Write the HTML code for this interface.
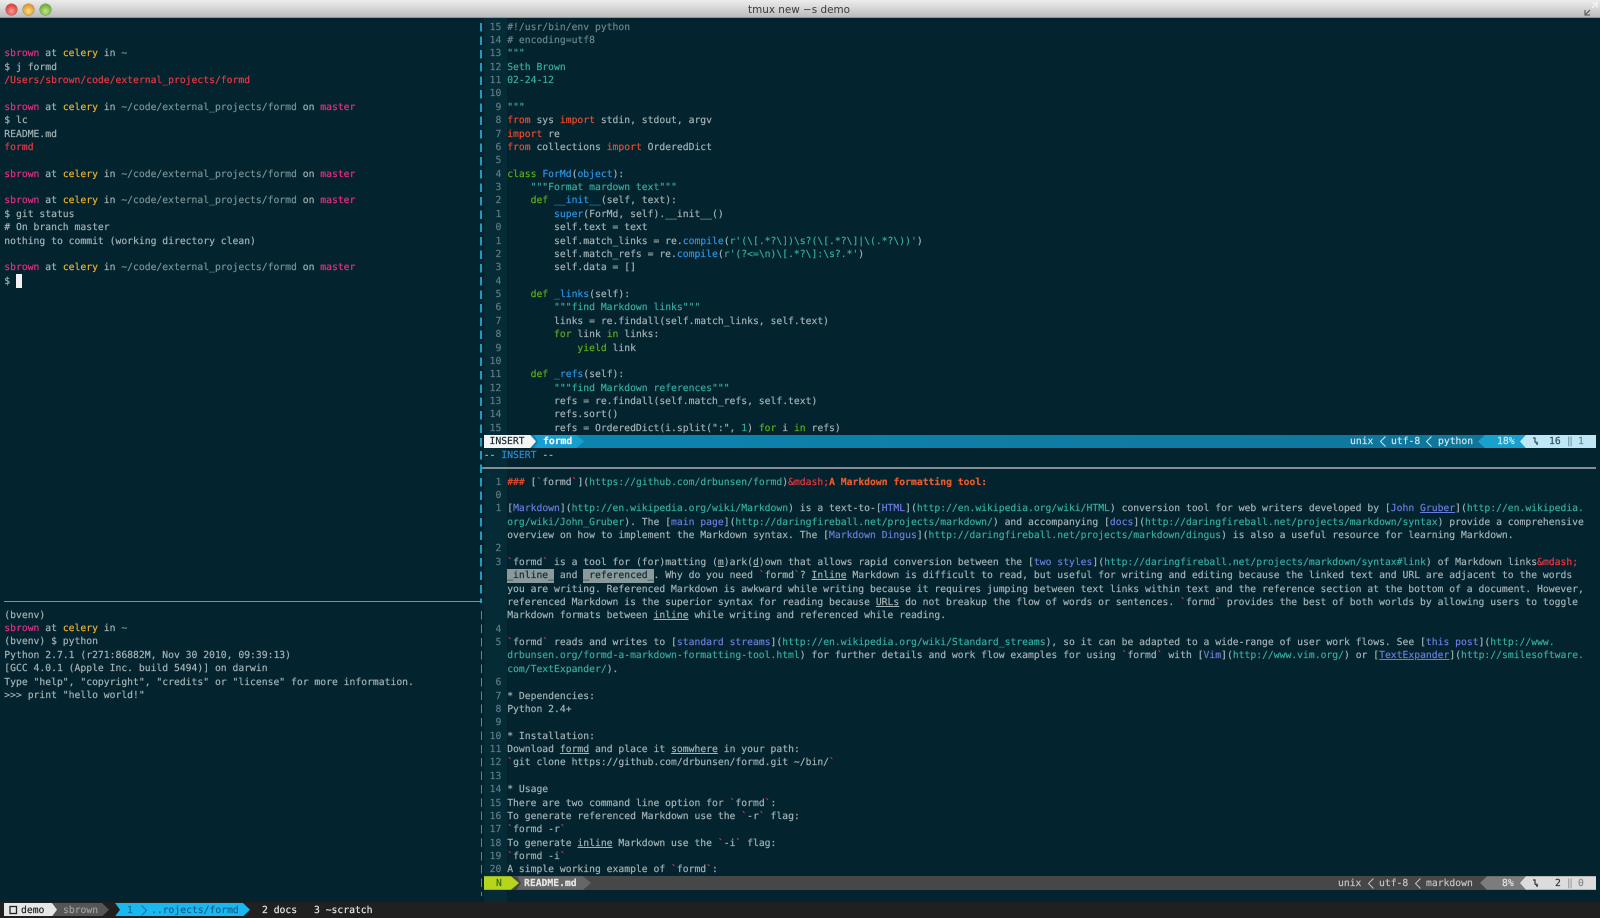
<!DOCTYPE html>
<html><head><meta charset="utf-8"><title>tmux new -s demo</title>
<style>
html,body{margin:0;padding:0;background:#03242f}
body{width:1600px;height:918px;overflow:hidden;position:relative}
#root{position:absolute;left:0;top:0;width:1600px;height:918px;background:#03242f;overflow:hidden;filter:blur(.3px)}
pre,.t{font-family:"DejaVu Sans Mono","Liberation Mono",monospace;font-size:9.73px;text-rendering:geometricPrecision;margin:0;-webkit-text-stroke:.18px}
pre{position:absolute;line-height:13.38px;color:#a4b2b4;white-space:pre}
.t{position:absolute;white-space:pre;line-height:13.38px;margin-top:.7px}
.a{position:absolute}
.p{color:#ea2c88}.y{color:#eeb02e}.d{color:#7a9296}.r{color:#f23640}.n{color:#5f7c84}
.c{color:#6a868c}.s{color:#36ad9f}.k{color:#f04c2c}.g{color:#5cae1c}.b{color:#2f94e2}
.v{color:#6c7cdc}.o{color:#ec5a2c;font-weight:bold}.q{color:#de3e54}.w{color:#a8b6b6}
u{text-decoration:underline;text-underline-offset:1px}
.h{display:inline-block;line-height:13.38px;background:#8a9a9a;color:#0c2a34}
</style></head><body><div id="root">

<div class="a" style="left:484px;top:18px;width:23px;height:884px;background:#052b37"></div>

<div class="a" style="left:0;top:0;width:1600px;height:18px;background:linear-gradient(#ececec,#dedede 30%,#b9b9b9)"></div>
<div class="a" style="left:0;top:17px;width:1600px;height:1px;background:#8a9a98"></div>
<div class="a" style="left:6px;top:3.5px;width:11px;height:11px;border-radius:50%;background:radial-gradient(circle at 50% 65%,#ff9a94,#d8433f 70%);box-shadow:0 0 0 .5px #9c4a48"></div>
<div class="a" style="left:23px;top:3.5px;width:11px;height:11px;border-radius:50%;background:radial-gradient(circle at 50% 65%,#ffdc8a,#dc9a2c 70%);box-shadow:0 0 0 .5px #9c7a3a"></div>
<div class="a" style="left:39.5px;top:3.5px;width:11px;height:11px;border-radius:50%;background:radial-gradient(circle at 50% 65%,#c4e88e,#6fae38 70%);box-shadow:0 0 0 .5px #5f8a3a"></div>
<div class="a" style="left:729px;top:2.5px;width:140px;text-align:center;font:10.4px/15px 'DejaVu Sans',sans-serif;color:#3a3a3a;white-space:nowrap">tmux new −s demo</div>
<svg class="a" style="left:1584px;top:2px" width="14" height="14" viewBox="0 0 14 14"><path d="M8 1h5v5M13 1L8 6" fill="none" stroke="#f4f4f4" stroke-width="1.3"/><path d="M6 13H1V8M1 13l5-5" fill="none" stroke="#666" stroke-width="1.3"/></svg>

<div class="a" style="left:480.3px;top:22.7px;width:1.7px;height:580px;background:repeating-linear-gradient(#1f9cc0 0,#1f9cc0 8.5px,transparent 8.5px,transparent 13.38px)"></div>
<div class="a" style="left:480.6px;top:611px;width:1.4px;height:285px;background:repeating-linear-gradient(#6f8488 0,#6f8488 8.5px,transparent 8.5px,transparent 13.38px)"></div>
<div class="a" style="left:4px;top:601px;width:478px;height:1px;background:#3fa6cc"></div>
<div class="a" style="left:481px;top:467.3px;width:1115px;height:1.5px;background:#858c96"></div>
<div class="a" style="left:481px;top:467.3px;width:3px;height:1.5px;background:#2ba0c4"></div>

<pre style="left:4.3px;top:20.5px">


<span class="p">sbrown</span> at <span class="y">celery</span> in <span class="d">~</span>
$ j formd
<span class="r">/Users/sbrown/code/external_projects/formd</span>

<span class="p">sbrown</span> at <span class="y">celery</span> in <span class="d">~/code/external_projects/formd</span> on <span class="p">master</span>
$ lc
README.md
<span class="r">formd</span>

<span class="p">sbrown</span> at <span class="y">celery</span> in <span class="d">~/code/external_projects/formd</span> on <span class="p">master</span>

<span class="p">sbrown</span> at <span class="y">celery</span> in <span class="d">~/code/external_projects/formd</span> on <span class="p">master</span>
$ git status
# On branch master
nothing to commit (working directory clean)

<span class="p">sbrown</span> at <span class="y">celery</span> in <span class="d">~/code/external_projects/formd</span> on <span class="p">master</span>
$</pre>
<div class="a" style="left:16px;top:274px;width:6px;height:14px;background:#f2f2f2"></div>

<pre style="left:4.3px;top:608.7px">(bvenv)
<span class="p">sbrown</span> at <span class="y">celery</span> in <span class="d">~</span>
(bvenv) $ python
Python 2.7.1 (r271:86882M, Nov 30 2010, 09:39:13)
[GCC 4.0.1 (Apple Inc. build 5494)] on darwin
Type "help", "copyright", "credits" or "license" for more information.
&gt;&gt;&gt; print "hello world!"</pre>

<pre style="left:483.8px;top:20.6px"><span class="n"> 15 </span><span class="c">#!/usr/bin/env python</span>
<span class="n"> 14 </span><span class="c"># encoding=utf8</span>
<span class="n"> 13 </span><span class="s">"""</span>
<span class="n"> 12 </span><span class="s">Seth Brown</span>
<span class="n"> 11 </span><span class="s">02-24-12</span>
<span class="n"> 10 </span>
<span class="n">  9 </span><span class="s">"""</span>
<span class="n">  8 </span><span class="k">from</span> sys <span class="k">import</span> stdin, stdout, argv
<span class="n">  7 </span><span class="k">import</span> re
<span class="n">  6 </span><span class="k">from</span> collections <span class="k">import</span> OrderedDict
<span class="n">  5 </span>
<span class="n">  4 </span><span class="g">class</span> <span class="b">ForMd</span>(<span class="b">object</span>):
<span class="n">  3 </span>    <span class="s">"""Format mardown text"""</span>
<span class="n">  2 </span>    <span class="g">def</span> <span class="b">__init__</span>(self, text):
<span class="n">  1 </span>        <span class="b">super</span>(ForMd, self).__init__()
<span class="n">  0 </span>        self.text = text
<span class="n">  1 </span>        self.match_links = re.<span class="b">compile</span>(<span class="s">r'(\[.*?\])\s?(\[.*?\]|\(.*?\))'</span>)
<span class="n">  2 </span>        self.match_refs = re.<span class="b">compile</span>(<span class="s">r'(?&lt;=\n)\[.*?\]:\s?.*'</span>)
<span class="n">  3 </span>        self.data = []
<span class="n">  4 </span>
<span class="n">  5 </span>    <span class="g">def</span> <span class="b">_links</span>(self):
<span class="n">  6 </span>        <span class="s">"""find Markdown links"""</span>
<span class="n">  7 </span>        links = re.findall(self.match_links, self.text)
<span class="n">  8 </span>        <span class="g">for</span> link <span class="g">in</span> links:
<span class="n">  9 </span>            <span class="g">yield</span> link
<span class="n"> 10 </span>
<span class="n"> 11 </span>    <span class="g">def</span> <span class="b">_refs</span>(self):
<span class="n"> 12 </span>        <span class="s">"""find Markdown references"""</span>
<span class="n"> 13 </span>        refs = re.findall(self.match_refs, self.text)
<span class="n"> 14 </span>        refs.sort()
<span class="n"> 15 </span>        refs = OrderedDict(i.split(":", <span class="s">1</span>) <span class="g">for</span> i <span class="g">in</span> refs)</pre>

<!-- upper statusline -->
<div class="a" style="left:484px;top:434.8px;width:1112px;height:13.4px;background:linear-gradient(90deg,#0b86b0,#0f7ba4 60%,#0f7398)"></div>
<div class="a" style="left:484px;top:434.8px;width:52px;height:13.4px;background:#f4f6f6;clip-path:polygon(0 0,46px 0,52px 50%,46px 100%,0 100%)"></div>
<div class="a" style="left:534px;top:434.8px;width:50px;height:13.4px;background:#17a0cf;clip-path:polygon(0 0,42px 0,50px 50%,42px 100%,0 100%,4px 50%)"></div>
<span class="t" style="left:489.5px;top:434.8px;color:#1b2a30">INSERT</span>
<span class="t" style="left:543px;top:434.8px;color:#eef8fc;font-weight:bold">formd</span>
<span class="t" style="left:1350px;top:434.8px;color:#cfe6ee">unix</span>
<svg class="a" style="left:1379px;top:435px" width="8" height="13"><path d="M6.5 1.5L1.5 6.5L6.5 11.5" fill="none" stroke="#cfe6ee"/></svg>
<span class="t" style="left:1391px;top:434.8px;color:#cfe6ee">utf-8</span>
<svg class="a" style="left:1425px;top:435px" width="8" height="13"><path d="M6.5 1.5L1.5 6.5L6.5 11.5" fill="none" stroke="#cfe6ee"/></svg>
<span class="t" style="left:1438px;top:434.8px;color:#cfe6ee">python</span>
<div class="a" style="left:1478px;top:434.8px;width:50px;height:13.4px;background:#19a0cc;clip-path:polygon(7px 0,100% 0,100% 100%,7px 100%,0 50%)"></div>
<span class="t" style="left:1497px;top:434.8px;color:#cdeaf4">18%</span>
<div class="a" style="left:1520px;top:434.8px;width:76px;height:13.4px;background:#bfe7f6;clip-path:polygon(6px 0,100% 0,100% 100%,6px 100%,0 50%)"></div>
<svg class="a" style="left:1532px;top:437px" width="8" height="9"><path d="M1 1h2v4l3 2M5 4.5v3.5" fill="none" stroke="#33505a" stroke-width="1.2"/></svg>
<span class="t" style="left:1549px;top:434.8px;color:#2c4e5a">16</span>
<span class="t" style="left:1567px;top:434.8px;color:#6f93a0">‖</span>
<span class="t" style="left:1578px;top:434.8px;color:#5f8a9a">1</span>
<pre style="left:483.8px;top:448.8px"><span>-- </span><span style="color:#2a8ed0">INSERT</span> --</pre>

<pre style="left:483.8px;top:475.5px"><span class="n">  1 </span><span class="k">###</span> [<span class="q">`</span>formd<span class="q">`</span>](<span class="s">https://github.com/drbunsen/formd</span>)<span class="r">&amp;mdash;</span><span class="o">A Markdown formatting tool:</span>
<span class="n">  0 </span>
<span class="n">  1 </span>[<span class="v">Markdown</span>](<span class="s">http://en.wikipedia.org/wiki/Markdown</span>) is a text-to-[<span class="v">HTML</span>](<span class="s">http://en.wikipedia.org/wiki/HTML</span>) conversion tool for web writers developed by [<span class="v">John <u>Gruber</u></span>](<span class="s">http://en.wikipedia.</span>
    <span class="s">org/wiki/John_Gruber</span>). The [<span class="v">main page</span>](<span class="s">http://daringfireball.net/projects/markdown/</span>) and accompanying [<span class="v">docs</span>](<span class="s">http://daringfireball.net/projects/markdown/syntax</span>) provide a comprehensive
    overview on how to implement the Markdown syntax. The [<span class="v">Markdown Dingus</span>](<span class="s">http://daringfireball.net/projects/markdown/dingus</span>) is also a useful resource for learning Markdown.
<span class="n">  2 </span>
<span class="n">  3 </span><span class="q">`</span>formd<span class="q">`</span> is a tool for (for)matting (<u>m</u>)ark(<u>d</u>)own that allows rapid conversion between the [<span class="v">two styles</span>](<span class="s">http://daringfireball.net/projects/markdown/syntax#link</span>) of Markdown links<span class="r">&amp;mdash;</span>
    <span class="h">_inline_</span> and <span class="h">_referenced_</span>. Why do you need <span class="q">`</span>formd<span class="q">`</span>? <u>Inline</u> Markdown is difficult to read, but useful for writing and editing because the linked text and URL are adjacent to the words
    you are writing. Referenced Markdown is awkward while writing because it requires jumping between text links within text and the reference section at the bottom of a document. However,
    referenced Markdown is the superior syntax for reading because <u>URLs</u> do not breakup the flow of words or sentences. <span class="q">`</span>formd<span class="q">`</span> provides the best of both worlds by allowing users to toggle
    Markdown formats between <u>inline</u> while writing and referenced while reading.
<span class="n">  4 </span>
<span class="n">  5 </span><span class="q">`</span>formd<span class="q">`</span> reads and writes to [<span class="v">standard streams</span>](<span class="s">http://en.wikipedia.org/wiki/Standard_streams</span>), so it can be adapted to a wide-range of user work flows. See [<span class="v">this post</span>](<span class="s">http://www.</span>
    <span class="s">drbunsen.org/formd-a-markdown-formatting-tool.html</span>) for further details and work flow examples for using <span class="q">`</span>formd<span class="q">`</span> with [<span class="v">Vim</span>](<span class="s">http://www.vim.org/</span>) or [<span class="v"><u>TextExpander</u></span>](<span class="s">http://smilesoftware.</span>
    <span class="s">com/TextExpander/</span>).
<span class="n">  6 </span>
<span class="n">  7 </span>* Dependencies:
<span class="n">  8 </span>Python 2.4+
<span class="n">  9 </span>
<span class="n"> 10 </span>* Installation:
<span class="n"> 11 </span>Download <u>formd</u> and place it <u>somwhere</u> in your path:
<span class="n"> 12 </span><span class="q">`</span>git clone https://github.com/drbunsen/formd.git ~/bin/<span class="q">`</span>
<span class="n"> 13 </span>
<span class="n"> 14 </span>* Usage
<span class="n"> 15 </span>There are two command line option for <span class="q">`</span>formd<span class="q">`</span>:
<span class="n"> 16 </span>To generate referenced Markdown use the <span class="q">`</span>-r<span class="q">`</span> flag:
<span class="n"> 17 </span><span class="q">`</span>formd -r<span class="q">`</span>
<span class="n"> 18 </span>To generate <u>inline</u> Markdown use the <span class="q">`</span>-i<span class="q">`</span> flag:
<span class="n"> 19 </span><span class="q">`</span>formd -i<span class="q">`</span>
<span class="n"> 20 </span>A simple working example of <span class="q">`</span>formd<span class="q">`</span>:</pre>

<!-- lower statusline -->
<div class="a" style="left:484px;top:876.3px;width:1112px;height:13.4px;background:#474747"></div>
<div class="a" style="left:484px;top:876.3px;width:35px;height:13.4px;background:#b5d61c;clip-path:polygon(0 0,27px 0,35px 50%,27px 100%,0 100%)"></div>
<div class="a" style="left:517px;top:876.3px;width:74px;height:13.4px;background:#666;clip-path:polygon(0 0,66px 0,74px 50%,66px 100%,0 100%,4px 50%)"></div>
<span class="t" style="left:496px;top:876.3px;color:#3a6a10">N</span>
<span class="t" style="left:524px;top:876.3px;color:#e6e6e6;font-weight:bold">README.md</span>
<span class="t" style="left:1338px;top:876.3px;color:#c4c4c4">unix</span>
<svg class="a" style="left:1367px;top:876.5px" width="8" height="13"><path d="M6.5 1.5L1.5 6.5L6.5 11.5" fill="none" stroke="#c4c4c4"/></svg>
<span class="t" style="left:1379px;top:876.3px;color:#c4c4c4">utf-8</span>
<svg class="a" style="left:1414px;top:876.5px" width="8" height="13"><path d="M6.5 1.5L1.5 6.5L6.5 11.5" fill="none" stroke="#c4c4c4"/></svg>
<span class="t" style="left:1426px;top:876.3px;color:#c4c4c4">markdown</span>
<div class="a" style="left:1480px;top:876.3px;width:48px;height:13.4px;background:#7c7c7c;clip-path:polygon(7px 0,100% 0,100% 100%,7px 100%,0 50%)"></div>
<span class="t" style="left:1502px;top:876.3px;color:#e2e2e2">8%</span>
<div class="a" style="left:1520px;top:876.3px;width:76px;height:13.4px;background:#dcdcdc;clip-path:polygon(6px 0,100% 0,100% 100%,6px 100%,0 50%)"></div>
<svg class="a" style="left:1532px;top:878.5px" width="8" height="9"><path d="M1 1h2v4l3 2M5 4.5v3.5" fill="none" stroke="#333" stroke-width="1.2"/></svg>
<span class="t" style="left:1555px;top:876.3px;color:#333">2</span>
<span class="t" style="left:1567px;top:876.3px;color:#999">‖</span>
<span class="t" style="left:1578px;top:876.3px;color:#888">0</span>

<!-- tmux bar -->
<div class="a" style="left:0;top:902px;width:1600px;height:16px;background:#202020"></div>
<div class="a" style="left:4px;top:903px;width:55px;height:13.4px;background:#e6e6e6;clip-path:polygon(0 0,48px 0,55px 50%,48px 100%,0 100%)"></div>
<div class="a" style="left:52px;top:903px;width:57px;height:13.4px;background:#555;clip-path:polygon(0 0,50px 0,57px 50%,50px 100%,0 100%,5px 50%)"></div>
<div class="a" style="left:115px;top:903px;width:135px;height:13.4px;background:#18b8f0;clip-path:polygon(0 0,128px 0,135px 50%,128px 100%,0 100%,5px 50%)"></div>
<svg class="a" style="left:9px;top:904.5px" width="9" height="10"><rect x="1" y="1.5" width="6.5" height="7" fill="none" stroke="#222" stroke-width="1.3"/></svg>
<span class="t" style="left:21px;top:903px;color:#222">demo</span>
<span class="t" style="left:63px;top:903px;color:#a0a0a0">sbrown</span>
<span class="t" style="left:127px;top:903px;color:#0f6f9c">1</span>
<svg class="a" style="left:140px;top:903.5px" width="8" height="13"><path d="M1.5 1.5L6.5 6.5L1.5 11.5" fill="none" stroke="#0f78a8"/></svg>
<span class="t" style="left:151px;top:903px;color:#0f5f8c">..rojects/formd</span>
<span class="t" style="left:262px;top:903px;color:#e6e6e6">2 docs</span>
<span class="t" style="left:314px;top:903px;color:#e6e6e6">3 ~scratch</span>

</div></body></html>
